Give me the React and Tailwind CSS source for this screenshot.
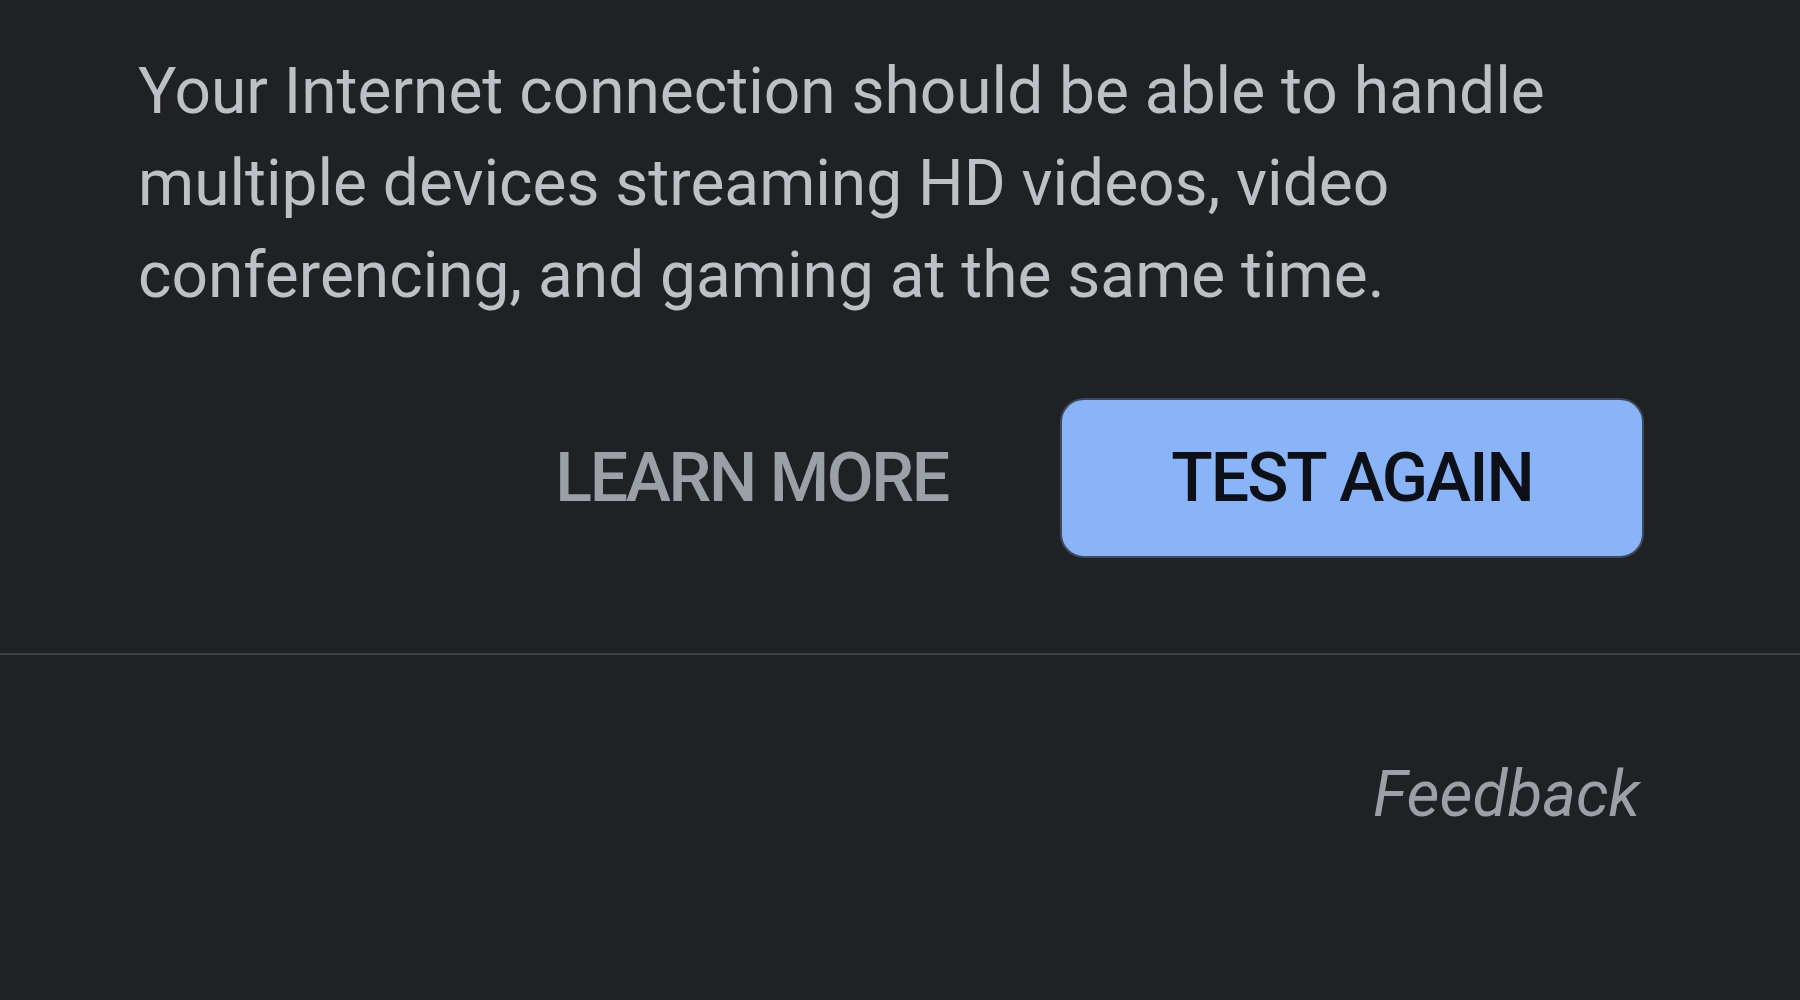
export default function App() {
  return (
    <div
      className="w-[1800px] h-[1000px] bg-[#202124] overflow-hidden"
      style={{ fontFamily: 'Roboto, "Liberation Sans", sans-serif' }}
    >
      <div className="pl-[138px] pr-[156px] pt-[46px]">
        <p className="text-[64px] leading-[92px] text-[#bdc1c6] w-[1500px]">
          Your Internet connection should be able to handle multiple devices streaming HD videos, video conferencing, and gaming at the same time.
        </p>

        <div className="flex justify-end items-center mt-[76px]">
          <button className="text-[68px] font-medium text-[#9aa0a6] tracking-[-2.3px] mr-[112px]">
            LEARN MORE
          </button>
          <button className="w-[584px] h-[160px] rounded-[24px] bg-[#8ab4f8] border-2 border-[#3c4a5c] text-[68px] font-medium text-[#0d1117] tracking-[-2px]">
            TEST AGAIN
          </button>
        </div>
      </div>

      <div className="mt-[95px] h-[2px] bg-[#3c4043]" />

      <div className="flex justify-end pr-[160px] pt-[92px]">
        <span className="text-[64px] italic text-[#9aa0a6]">Feedback</span>
      </div>
    </div>
  );
}
